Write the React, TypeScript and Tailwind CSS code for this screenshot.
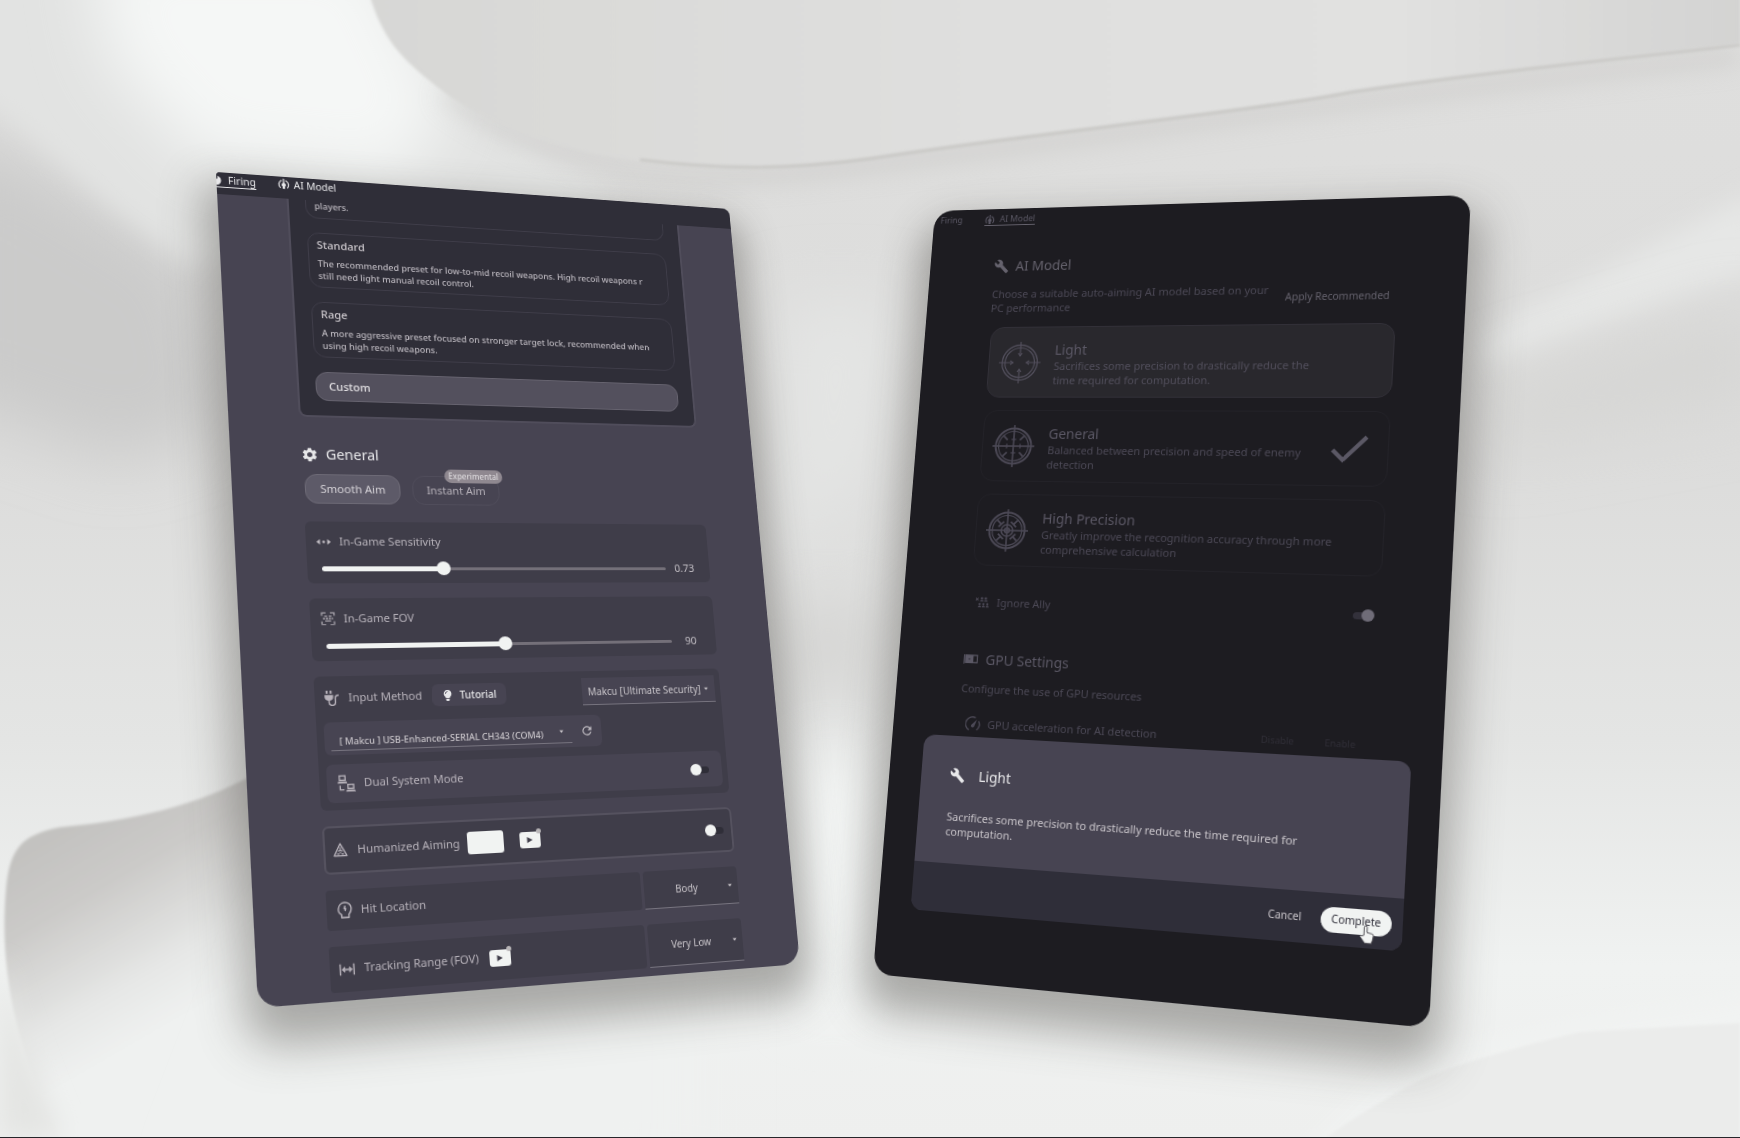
import React, { useLayoutEffect, useRef, useState } from "react";
import type { ReactNode } from "react";
import { MdBuild, MdRefresh, MdSettings } from "react-icons/md";
import { FaLightbulb } from "react-icons/fa";

type Point = [number, number];

/* Projective matrix that carries a width x height box onto four corners, clockwise from top left. */
function perspectiveMatrix(width: number, height: number, corners: Point[]) {
  const [[x0, y0], [x1, y1], [x2, y2], [x3, y3]] = corners;
  const dx1 = x1 - x2;
  const dx2 = x3 - x2;
  const sx = x0 - x1 + x2 - x3;
  const dy1 = y1 - y2;
  const dy2 = y3 - y2;
  const sy = y0 - y1 + y2 - y3;
  const den = dx1 * dy2 - dx2 * dy1;
  const g = (sx * dy2 - dx2 * sy) / den;
  const h = (dx1 * sy - sx * dy1) / den;
  const a = x1 - x0 + g * x1;
  const b = x3 - x0 + h * x3;
  const d = y1 - y0 + g * y1;
  const e = y3 - y0 + h * y3;
  const m = [
    a / width, d / width, 0, g / width,
    b / height, e / height, 0, h / height,
    0, 0, 1, 0,
    x0, y0, 0, 1,
  ];
  return `matrix3d(${m.join(",")})`;
}

function TiltedScreen({ corners, className, children }: { corners: Point[]; className: string; children: ReactNode }) {
  const ref = useRef<HTMLElement>(null);
  const [transform, setTransform] = useState("none");
  useLayoutEffect(() => {
    const el = ref.current;
    if (!el) return;
    const update = () => setTransform(perspectiveMatrix(el.offsetWidth, el.offsetHeight, corners));
    update();
    const observer = new ResizeObserver(update);
    observer.observe(el);
    return () => observer.disconnect();
  }, [corners]);
  return (
    <section ref={ref} className={`relative w-full max-w-[540px] origin-top-left overflow-hidden ${className}`} style={{ transform }}>
      {children}
    </section>
  );
}

const LEFT_CORNERS: Point[] = [[0, 1], [513, 38], [584, 793], [42, 837]];
const RIGHT_CORNERS: Point[] = [[-49, 40], [487, 24], [445, 857], [-111, 803]];

/* ---------- icons ---------- */

type IconProps = { className?: string };

function AntennaIcon({ className }: IconProps) {
  return (
    <svg viewBox="0 0 20 20" className={className} fill="none" stroke="currentColor" strokeWidth="2" aria-hidden="true">
      <path d="M4.500 16.500a8.500 8.500 0 0 1 2.500-13.500M13 3a8.500 8.500 0 0 1 2.500 13.500" />
      <path d="M10 0v7" />
      <path d="M10 6l3.500 4v3h-1.500v5H8v-5H6.500v-3z" fill="currentColor" stroke="none" />
    </svg>
  );
}

function FireIcon({ className }: IconProps) {
  return (
    <svg viewBox="0 0 20 20" className={className} fill="currentColor" aria-hidden="true">
      <path d="M10 1a9 9 0 1 0 0 18c6 0 9-4 9-9 0-5-4-8-6-8.500 1 4-1 6.500-3 6.500z" />
    </svg>
  );
}

function SensitivityIcon({ className }: IconProps) {
  return (
    <svg viewBox="0 0 20 10" className={className} fill="currentColor" aria-hidden="true">
      <path d="M5 1v8L0 5zM15 1v8l5-4z" />
      <circle cx="10" cy="5" r="1.800" />
    </svg>
  );
}

function ScanIcon({ className }: IconProps) {
  return (
    <svg viewBox="0 0 20 20" className={className} fill="none" stroke="currentColor" strokeWidth="1.800" aria-hidden="true">
      <path d="M1.500 6V2H7M13 2h5.500v4M18.500 14v4H13M7 18H1.500v-4" />
      <path d="M5 6.500h4M11 6.500h4M6 13.500h8" />
      <path d="M3 10h14" strokeDasharray="3 1" />
    </svg>
  );
}

function PlugIcon({ className }: IconProps) {
  return (
    <svg viewBox="0 0 20 20" className={className} fill="none" stroke="currentColor" strokeWidth="1.800" aria-hidden="true">
      <path d="M3.500 0v4M8.500 0v4" strokeWidth="2.500" />
      <path d="M0.500 5.500h11v2.500c0 3-2 4.500-3.500 5H4c-1.500-.5-3.500-2-3.500-5z" fill="currentColor" stroke="none" />
      <path d="M6 12v3.500C6 20.500 14 20.500 14 15.500V10c0-3 2-4 4.500-4" />
    </svg>
  );
}

function DualPcIcon({ className }: IconProps) {
  return (
    <svg viewBox="0 0 22 22" className={className} fill="none" stroke="currentColor" strokeWidth="1.700" aria-hidden="true">
      <path d="M2.500 1.500h7V7h-7z" />
      <path d="M1 8.500h10l1 2.500H0z" fill="currentColor" stroke="none" />
      <path d="M12.500 12.500h7v5h-7z" />
      <path d="M11 19h10l1 2.500H10z" fill="currentColor" stroke="none" />
      <path d="M3 13.500V19h5" />
    </svg>
  );
}

function TriangleIcon({ className }: IconProps) {
  return (
    <svg viewBox="0 0 20 20" className={className} fill="none" stroke="currentColor" strokeWidth="1.800" strokeLinejoin="round" aria-hidden="true">
      <path d="M10 1.500l8.500 16.500h-17z" />
      <path d="M10 6v4M7 12l3-2 3 2M5.500 15.500h3M11.500 15.500h3M10 12v3" strokeWidth="1.500" />
    </svg>
  );
}

function HeadIcon({ className }: IconProps) {
  return (
    <svg viewBox="0 0 20 20" className={className} fill="none" stroke="currentColor" strokeWidth="1.700" strokeLinejoin="round" aria-hidden="true">
      <path d="M6 19v-3.500C3.800 14 2 12 2.500 8.500 3 4.500 6 1.200 10 1.200s7.500 3 7.500 7.300c0 3-1 5-3 7V19z" />
      <path d="M10.500 5L9.300 8.500h1.700l-.7 3" strokeWidth="1.700" />
    </svg>
  );
}

function RangeIcon({ className }: IconProps) {
  return (
    <svg viewBox="0 0 20 16" className={className} fill="none" stroke="currentColor" strokeWidth="1.800" aria-hidden="true">
      <path d="M1.500 1v14M18.500 1v14M5 8h10M7.500 5L4.500 8l3 3M12.500 5l3 3-3 3" />
    </svg>
  );
}

function AlliesIcon({ className }: IconProps) {
  return (
    <svg viewBox="0 0 24 18" className={className} fill="currentColor" aria-hidden="true">
      <path d="M1 3l1-1 1.500 1.500L5 2l1 1-1.500 1.500L6 6 5 7 3.500 5.500 2 7 1 6l1.500-1.500z" />
      <circle cx="11" cy="3" r="2" />
      <circle cx="17" cy="3" r="2" />
      <path d="M8 8c0-3 6-3 6 0zM14.500 8c0-3 6-3 6 0z" />
      <circle cx="8" cy="12" r="1.700" />
      <circle cx="14" cy="12" r="1.700" />
      <circle cx="20" cy="12" r="1.700" />
      <path d="M5.500 17c0-3.500 5-3.500 5 0zM11.500 17c0-3.500 5-3.500 5 0zM17.500 17c0-3.500 5-3.500 5 0z" />
    </svg>
  );
}

function GpuIcon({ className }: IconProps) {
  return (
    <svg viewBox="0 0 22 14" className={className} aria-hidden="true">
      <path d="M1 0v14" stroke="currentColor" strokeWidth="1.600" />
      <rect x="3" y="1" width="18" height="11" fill="none" stroke="currentColor" strokeWidth="1.600" />
      <rect x="3" y="1" width="12" height="12" fill="currentColor" />
      <circle cx="9" cy="6.500" r="1.500" className="fill-[#3d3b45]" />
    </svg>
  );
}

function GaugeIcon({ className }: IconProps) {
  return (
    <svg viewBox="0 0 20 20" className={className} fill="none" stroke="currentColor" strokeWidth="1.800" aria-hidden="true">
      <path d="M5 17.500A8.600 8.600 0 0 1 13 2M17 6a8.600 8.600 0 0 1-2 11.500" />
      <path d="M15 4l-3.200 8.500a2.200 2.200 0 1 1-3.600-2z" fill="currentColor" stroke="none" />
    </svg>
  );
}

function Reticle({ className, detail }: IconProps & { detail: 1 | 2 | 3 }) {
  const diagonals = [45, 135, 225, 315];
  return (
    <svg viewBox="0 0 44 44" className={className} fill="none" stroke="currentColor" strokeWidth="1.200" aria-hidden="true">
      <circle cx="22" cy="22" r="18.500" strokeWidth={detail === 1 ? 1.4 : 2} />
      <circle cx="22" cy="22" r="15.500" />
      {[0, 90, 180, 270].map((angle) => (
        <g key={angle} transform={`rotate(${angle} 22 22)`}>
          <path d={detail === 1 ? "M22 0v15" : "M22 0v22"} strokeWidth={detail === 1 ? 1.2 : 1.6} />
          {detail === 1 && <path d="M20 12l2 3 2-3" />}
          {detail === 2 && <path d="M19.500 15h5" />}
        </g>
      ))}
      {detail > 1 &&
        diagonals.map((angle) => (
          <g key={angle} transform={`rotate(${angle} 22 22)`}>
            <path d="M22 7v6" strokeWidth="1.800" />
            {detail === 3 && <path d="M18 13h8" strokeWidth="1.800" />}
          </g>
        ))}
      {detail === 3 && (
        <>
          <circle cx="22" cy="22" r="6" strokeWidth="1.600" />
          <circle cx="22" cy="22" r="2.500" strokeWidth="1.600" />
        </>
      )}
    </svg>
  );
}

function HandCursor({ className }: IconProps) {
  return (
    <svg viewBox="0 0 16 20" className={className} aria-hidden="true">
      <path
        d="M5 11V2.500a1.500 1.500 0 0 1 3 0V8l5.500 1.200c1 .3 1.500 1 1.400 2L14 16l-1 3.500H6L1 13c-.5-1.200 1-2 2-1.200z"
        fill="#f3f4f3"
        stroke="#4b4950"
        strokeWidth="1"
      />
    </svg>
  );
}

/* ---------- controls ---------- */

function Caret({ className }: IconProps) {
  return (
    <svg viewBox="0 0 6 4" className={`pointer-events-none h-[3px] w-[5px] ${className ?? ""}`} fill="currentColor" aria-hidden="true">
      <path d="M0 0h6L3 4z" />
    </svg>
  );
}

function Dropdown({ label, value, className, caret, align }: { label: string; value: string; className: string; caret: string; align: string }) {
  return (
    <div className={`relative text-[#c9c5ca] ${className}`}>
      <select aria-label={label} className={`h-full w-full appearance-none bg-transparent leading-4 outline-none ${align}`}>
        <option>{value}</option>
      </select>
      <Caret className={`absolute top-1/2 -translate-y-1/2 ${caret}`} />
    </div>
  );
}

function Toggle({ id, defaultChecked = false, dim = false }: { id: string; defaultChecked?: boolean; dim?: boolean }) {
  const tone = dim
    ? "before:left-0 before:bg-[#33313b] after:right-0 after:bg-[#6f6c78]"
    : "before:right-0 before:bg-[#2f2e38] after:left-0 after:bg-[#f1f3f2]";
  return (
    <input
      id={id}
      type="checkbox"
      role="switch"
      defaultChecked={defaultChecked}
      className={`relative h-3 w-5 shrink-0 appearance-none before:absolute before:top-[3px] before:h-[7px] before:w-4 before:rounded-full after:absolute after:top-0 after:size-3 after:rounded-full ${tone}`}
    />
  );
}

function VideoButton({ label }: { label: string }) {
  return (
    <button type="button" aria-label={label} className="relative h-4 w-[21px] shrink-0 rounded-[3px] bg-[#f1f3f2]">
      <svg viewBox="0 0 6 6" className="mx-auto size-[6px] fill-[#3f3d49]" aria-hidden="true">
        <path d="M0.500 0L6 3 0.500 6z" />
      </svg>
      <span className="absolute -top-[3px] -right-px size-[5px] rounded-full bg-[#b9b6b8]" />
    </button>
  );
}

function SliderCard({ id, icon, label, min, max, step, initial }: { id: string; icon: ReactNode; label: string; min: number; max: number; step: number; initial: number }) {
  const [value, setValue] = useState(initial);
  const filled = ((value - min) / (max - min)) * 100;
  return (
    <div className="flex h-[62px] flex-col rounded-md bg-[#3f3d49] pt-3 pr-4 pl-[9px]">
      <div className="flex items-center gap-[7px]">
        <span className="flex w-4 justify-center">{icon}</span>
        <label htmlFor={id} className="text-[11px] leading-4 text-[#b7b2ba]">{label}</label>
      </div>
      <div className="mt-[11px] flex items-center gap-[9px] pl-[5px]">
        <div className="relative flex h-4 flex-1 items-center">
          <span className="absolute inset-x-0 h-[3px] rounded-full bg-[#747079]" />
          <span className="absolute left-0 h-[5px] rounded-full bg-[#f1f3f2]" style={{ width: `${filled}%` }} />
          <input
            id={id}
            type="range"
            min={min}
            max={max}
            step={step}
            value={value}
            onChange={(event) => setValue(Number(event.target.value))}
            className="relative h-4 w-full appearance-none bg-transparent [&::-webkit-slider-thumb]:size-[14px] [&::-webkit-slider-thumb]:appearance-none [&::-webkit-slider-thumb]:rounded-full [&::-webkit-slider-thumb]:bg-[#f1f3f2]"
          />
        </div>
        <output htmlFor={id} className="w-[23px] text-center text-[11px] leading-4 text-[#c3bfc5]">{value}</output>
      </div>
    </div>
  );
}

function Preset({ title, lines }: { title: string; lines: string[] }) {
  return (
    <button type="button" className="flex h-[58px] flex-col overflow-hidden rounded-xl border border-[#3f3d49] px-2 pt-1 text-left">
      <span className="text-[11px] leading-[15px] font-medium text-[#c9c5ca]">{title}</span>
      <span className="mt-[6px] text-[9px] leading-[13px] font-medium whitespace-nowrap text-[#bcb8bf]">
        {lines.map((line) => (
          <span key={line} className="block">{line}</span>
        ))}
      </span>
    </button>
  );
}

/* ---------- screens ---------- */

function FiringScreen() {
  return (
    <TiltedScreen corners={LEFT_CORNERS} className="rounded-t-lg rounded-b-[20px] rounded-tl-[4px] bg-[#474452] shadow-[0_24px_42px_12px_rgba(72,69,64,0.42)]">
      <header className="h-[23px] bg-[#2f2e38] text-[10px] leading-3 text-[#e8e8ea]">
        <nav className="-ml-[6px] flex gap-[21px] pt-[2px]">
          <a href="#firing" className="flex items-center gap-[6px] border-b border-[#e8e8ea] pb-px"><FireIcon className="size-[11px]" />Firing</a>
          <a href="#ai-model" className="flex items-center gap-1 pb-[2px]"><AntennaIcon className="size-3" />AI Model</a>
        </nav>
      </header>
      <div className="pr-[60px] pb-2 pl-[67px]">
        <div className="flex flex-col gap-[15px] rounded-b-lg border-2 border-t-0 border-[#504d5b] bg-[#2f2e38] px-4 pb-[15px]">
          <div className="h-[19px] rounded-b-xl border-x border-b border-[#3f3d49] px-2 text-[9px] leading-[11px] font-medium text-[#bcb8bf]">players.</div>
          <Preset
            title="Standard"
            lines={["The recommended preset for low-to-mid recoil weapons. High recoil weapons r", "still need light manual recoil control."]}
          />
          <Preset
            title="Rage"
            lines={["A more aggressive preset focused on stronger target lock, recommended when", "using high recoil weapons."]}
          />
          <button type="button" className="h-[30px] rounded-xl border border-[#66636f] bg-[#53505d] px-3 text-left text-[11px] font-medium text-[#e3e1e4]">Custom</button>
        </div>

        <h2 className="mt-7 flex items-center gap-[7px] text-[14px] leading-5 text-[#e8e8ea]">
          <MdSettings className="size-[17px]" />General
        </h2>
        <div className="mt-[10px] flex gap-3 pl-[2px]">
          <button type="button" className="h-[30px] w-[93px] rounded-xl border border-[#6d6a76] bg-[#5d5a68] text-[11px] text-[#d6d3d8]">Smooth Aim</button>
          <button type="button" className="relative h-[30px] w-[88px] rounded-xl border border-[#504d5b] text-[11px] text-[#b7b2ba]">
            Instant Aim
            <span className="absolute -top-2 -right-[5px] rounded-full bg-[#8f8890] px-1 text-[8px] leading-[14px] font-medium text-[#dcd9dc]">Experimental</span>
          </button>
        </div>

        <div className="mt-[18px] flex flex-col gap-[15px]">
          <SliderCard id="sensitivity" label="In-Game Sensitivity" icon={<SensitivityIcon className="h-[7px] w-[14px] text-[#c3bfc5]" />} min={0} max={2.2} step={0.01} initial={0.73} />
          <SliderCard id="fov" label="In-Game FOV" icon={<ScanIcon className="size-[14px] text-[#a8a4ac]" />} min={60} max={120} step={1} initial={90} />

          <div className="rounded-md bg-[#3f3d49] p-[7px] pr-[6px]">
            <div className="flex h-7 items-center">
              <span className="flex w-[25px] pl-[2px]"><PlugIcon className="size-[15px] text-[#b7b2ba]" /></span>
              <span className="text-[11px] text-[#b7b2ba]">Input Method</span>
              <button type="button" className="ml-[10px] flex h-[22px] w-[74px] items-center justify-center gap-[6px] rounded-md bg-[#474452] text-[10px] font-medium text-[#e8e8ea]">
                <FaLightbulb className="size-[11px]" />Tutorial
              </button>
              <Dropdown label="Input method" value="Makcu [Ultimate Security]" className="ml-auto h-7 w-[142px] border-b border-[#77747f] bg-[#474452]" align="pl-[6px] text-[10px]" caret="right-[7px]" />
            </div>
            <div className="mt-[10px] flex h-8 w-[275px] items-center rounded-md bg-[#474452] pl-[6px]">
              <Dropdown label="Serial port" value="[ Makcu ] USB-Enhanced-SERIAL CH343 (COM4)" className="h-6 w-[238px] border-b border-[#77747f]" align="pb-1 pl-2 text-[9px] font-medium" caret="right-2" />
              <button type="button" aria-label="Refresh ports" className="ml-[9px]"><MdRefresh className="size-[14px] text-[#c3bfc5]" /></button>
            </div>
            <div className="mt-[9px] flex h-[37px] items-center rounded-md bg-[#474452] pr-[14px] pl-[10px]">
              <DualPcIcon className="size-[17px] text-[#b7b2ba]" />
              <label htmlFor="dual" className="mr-auto pl-2 text-[11px] text-[#b7b2ba]">Dual System Mode</label>
              <Toggle id="dual" />
            </div>
          </div>

          <div className="flex h-[46px] items-center rounded-md border-2 border-[#55525f] bg-[#3f3d49] pr-2 pl-[7px]">
            <TriangleIcon className="size-[14px] text-[#b7b2ba]" />
            <label htmlFor="humanized" className="pl-[9px] text-[11px] text-[#b7b2ba]">Humanized Aiming</label>
            <span className="ml-[7px] h-[22px] w-9 rounded-[3px] bg-[#f1f3f2]" />
            <span className="mr-auto ml-4 flex"><VideoButton label="Humanized aiming video" /></span>
            <Toggle id="humanized" />
          </div>

          <div className="flex h-[38px] gap-[3px]">
            <div className="flex flex-1 items-center rounded-sm bg-[#3f3d49] pl-[9px] text-[11px] text-[#b7b2ba]">
              <HeadIcon className="mr-[7px] size-4" />Hit Location
            </div>
            <Dropdown label="Hit location" value="Body" className="w-[100px] rounded-t-sm border-b border-[#77747f] bg-[#3f3d49]" align="pr-[10px] text-center text-[10px]" caret="right-[6px]" />
          </div>

          <div className="flex h-[43px] gap-[3px]">
            <div className="flex flex-1 items-center rounded-sm bg-[#3f3d49] pl-[8px] text-[11px] text-[#b7b2ba]">
              <RangeIcon className="mr-2 h-3 w-4" />Tracking Range (FOV)
              <span className="ml-[10px] flex"><VideoButton label="Tracking range video" /></span>
            </div>
            <Dropdown label="Tracking range" value="Very Low" className="w-[100px] rounded-t-sm border-b border-[#77747f] bg-[#3f3d49]" align="pr-[10px] text-center text-[10px]" caret="right-[6px]" />
          </div>
        </div>
      </div>
    </TiltedScreen>
  );
}

function ModelCard({ detail, title, lines, className, children }: { detail: 1 | 2 | 3; title: string; lines: string[]; className: string; children?: ReactNode }) {
  return (
    <button type="button" className={`flex h-[75px] items-center rounded-[14px] border px-[10px] text-left ${className}`}>
      <Reticle detail={detail} className="size-[44px] shrink-0" />
      <span className="mt-1 ml-[14px] whitespace-nowrap">
        <span className="block text-[14px] leading-[18px] text-[#5b5865]">{title}</span>
        {lines.map((line) => (
          <span key={line} className="block text-[11px] leading-[15px]">{line}</span>
        ))}
      </span>
      {children}
    </button>
  );
}

function AiModelScreen() {
  return (
    <TiltedScreen corners={RIGHT_CORNERS} className="rounded-[20px] bg-[#1d1c21] text-[#4c4956] shadow-[0_24px_42px_12px_rgba(72,69,64,0.42)]">
      <header className="h-[23px] text-[9px] leading-3 text-[#5b5865]">
        <nav className="flex gap-[24px] pt-[5px] pl-[7px]">
          <a href="#firing">Firing</a>
          <a href="#ai-model" className="flex items-center gap-[5px] border-b border-[#65626d]"><AntennaIcon className="size-[11px]" />AI Model</a>
        </nav>
      </header>
      <div className="flex min-h-[777px] flex-col pt-[29px] pr-[64px] pl-[69px]">
        <h2 className="flex items-center gap-[7px] text-[14px] leading-5 text-[#65626d]">
          <MdBuild className="size-4" />AI Model
        </h2>
        <div className="mt-3 flex items-center justify-between">
          <p className="text-[11px] leading-[15px] whitespace-nowrap">Choose a suitable auto-aiming AI model based on your<br />PC performance</p>
          <button type="button" className="mr-[7px] text-[10px] text-[#65626d]">Apply Recommended</button>
        </div>
        <div className="mt-[13px] flex flex-col gap-[13px] pl-[2px]">
          <ModelCard detail={1} title="Light" lines={["Sacrifices some precision to drastically reduce the", "time required for computation."]} className="border-[#323038] bg-[#29282d] text-[#524f5c]" />
          <ModelCard detail={2} title="General" lines={["Balanced between precision and speed of enemy", "detection"]} className="border-[#232228] text-[#4c4956]">
            <svg viewBox="0 0 36 28" className="mr-2 ml-auto h-7 w-9 text-[#5b5865]" fill="none" stroke="currentColor" strokeWidth="4" aria-hidden="true">
              <path d="M2 15l10 10L34 2" />
            </svg>
          </ModelCard>
          <ModelCard detail={3} title="High Precision" lines={["Greatly improve the recognition accuracy through more", "comprehensive calculation"]} className="border-[#232228] text-[#4c4956]" />
        </div>
        <div className="mt-7 flex items-center pr-[5px] pl-[7px]">
          <AlliesIcon className="h-3 w-4" />
          <label htmlFor="ignore-ally" className="mr-auto pl-[7px] text-[11px] leading-5">Ignore Ally</label>
          <Toggle id="ignore-ally" defaultChecked dim />
        </div>
        <h2 className="mt-[39px] flex items-center gap-2 text-[14px] leading-5 text-[#5b5865]">
          <GpuIcon className="h-[10px] w-[15px]" />GPU Settings
        </h2>
        <p className="mt-3 text-[11px] leading-[15px]">Configure the use of GPU resources</p>
        <div className="mt-[19px] flex items-center pl-[7px] text-[11px] leading-5">
          <GaugeIcon className="mr-[7px] size-4" />
          <span className="mr-auto">GPU acceleration for AI detection</span>
          <span className="flex gap-[29px] pr-[16px] text-[9px] text-[#312f38]">
            <button type="button">Disable</button>
            <button type="button">Enable</button>
          </span>
        </div>
      </div>

      <div role="dialog" aria-labelledby="dialog-title" className="absolute top-[554px] right-7 left-[34px] overflow-hidden rounded-xl bg-[#474452]">
        <div className="h-[129px] px-[30px] pt-[30px]">
          <h2 id="dialog-title" className="flex items-center gap-[14px] text-[14px] leading-5 text-[#e8e8ea]">
            <MdBuild className="size-4" />Light
          </h2>
          <p className="mt-6 text-[11px] leading-[15px] whitespace-nowrap text-[#c9c5ca]">
            Sacrifices some precision to drastically reduce the time required for<br />computation.
          </p>
        </div>
        <div className="flex h-[49px] items-center justify-end gap-[18px] bg-[#2f2e39] pr-[10px] text-[10px]">
          <button type="button" className="text-[#c9c5ca]">Cancel</button>
          <button type="button" className="h-6 w-[65px] rounded-full bg-[#f1f3f2] text-[#2f2e39]">Complete</button>
        </div>
        <HandCursor className="absolute right-[25px] bottom-1 h-[18px] w-[14px]" />
      </div>
    </TiltedScreen>
  );
}

function SilkBackground() {
  return (
    <svg viewBox="0 0 1740 1138" preserveAspectRatio="none" className="absolute inset-0 h-full w-full" aria-hidden="true">
      <defs>
        <linearGradient id="base" x1="0" y1="0" x2="0" y2="1">
          <stop offset="0" stopColor="#dfdfde" />
          <stop offset="0.4" stopColor="#dcdcdb" />
          <stop offset="0.65" stopColor="#e4e5e4" />
          <stop offset="0.85" stopColor="#f0f2f1" />
          <stop offset="1" stopColor="#eeefee" />
        </linearGradient>
        <linearGradient id="cap" x1="0" y1="0" x2="1" y2="0">
          <stop offset="0" stopColor="#d7d7d5" />
          <stop offset="0.45" stopColor="#dfdfde" />
          <stop offset="0.75" stopColor="#e1e1e0" />
          <stop offset="1" stopColor="#d3d3d2" />
        </linearGradient>
        <linearGradient id="fold" gradientUnits="userSpaceOnUse" x1="120" y1="800" x2="230" y2="990">
          <stop offset="0" stopColor="#c3c2c0" />
          <stop offset="0.3" stopColor="#cbcac8" />
          <stop offset="0.75" stopColor="#e6e7e6" />
          <stop offset="1" stopColor="#eff1f0" />
        </linearGradient>
        <filter id="b2" x="-20%" y="-20%" width="140%" height="140%"><feGaussianBlur stdDeviation="1.500" /></filter>
        <filter id="b12" x="-30%" y="-30%" width="160%" height="160%"><feGaussianBlur stdDeviation="12" /></filter>
        <filter id="b35" x="-80%" y="-50%" width="260%" height="200%"><feGaussianBlur stdDeviation="32" /></filter>
      </defs>
      <rect width="1740" height="1138" fill="url(#base)" />
      <path d="M-60 120L60 180L190 260L230 420L120 460L-60 400z" fill="#cbcbca" filter="url(#b35)" />
      <path d="M-40 -40H400L470 110L620 200L330 250L190 265L110 205L0 110L-40 90z" fill="#e2e3e2" filter="url(#b12)" />
      <path d="M90 -60H370L450 110L400 180L200 160L110 60z" fill="#f5f7f6" filter="url(#b35)" />
      <path d="M444 92C520 150 620 176 738 176C860 174 1200 114 1740 56" fill="none" stroke="#bdbcb9" strokeWidth="14" opacity="0.5" filter="url(#b12)" />
      <path d="M371 0C386 45 405 62 444 92C500 134 600 167 738 167C780 167 830 163 870 157C1030 132 1250 110 1353 90C1500 68 1640 55 1740 43V-10H371z" fill="url(#cap)" filter="url(#b2)" />
      <path d="M640 160C720 170 790 170 870 159C1030 134 1250 112 1353 92C1500 70 1640 57 1740 45" fill="none" stroke="#c2c1be" strokeWidth="2" filter="url(#b2)" />
      <path d="M1760 190L1480 335L1480 370L1760 270z" fill="#e6e7e6" filter="url(#b12)" />
      <path d="M1760 305L1500 382L1480 450L1600 430L1760 400z" fill="#d6d6d4" filter="url(#b35)" />
      <path d="M780 300L900 300L880 480L780 560z" fill="#e4e5e4" filter="url(#b35)" />
      <path d="M770 600L890 600L870 700L780 700z" fill="#d6d6d4" filter="url(#b35)" />
      <path d="M805 760L865 760L855 1000L810 1000z" fill="#f8faf9" filter="url(#b35)" />
      <path d="M260 772C210 800 150 820 60 828C20 836 10 850 6 890C0 960 10 1040 60 1138H500V772z" fill="url(#fold)" filter="url(#b2)" />
      <path d="M300 940H700V1200H200z" fill="#eff1f0" filter="url(#b35)" />
      <path d="M0 1138V960Q20 1040 62 1138z" fill="#e4e5e3" filter="url(#b12)" />
      <path d="M1780 990L1600 1020L1400 1060L1300 1160H1780z" fill="#f1f3f2" filter="url(#b12)" />
      <path d="M1740 1024L1580 1033Q1440 1066 1400 1092Q1350 1120 1325 1140H1740z" fill="#ebeceb" filter="url(#b2)" />
    </svg>
  );
}

export default function App() {
  return (
    <main className="relative min-h-screen overflow-hidden border-b border-[#26262a] font-['Noto_Sans','Liberation_Sans',sans-serif]">
      <SilkBackground />
      <div className="relative flex items-start justify-center gap-[228px] pt-[171px]">
        <FiringScreen />
        <AiModelScreen />
      </div>
    </main>
  );
}
